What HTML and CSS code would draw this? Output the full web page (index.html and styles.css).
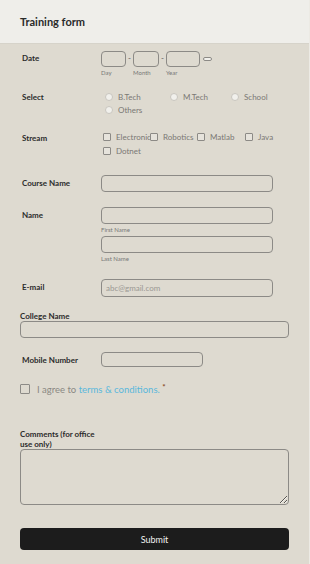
FILE: index.html
```html
<!DOCTYPE html>
<html lang="en">

<head>
    <meta charset="UTF-8">
    <meta name="viewport" content="width=device-width, initial-scale=1.0">
    <title>Training form</title>
    <link rel="stylesheet" href="styles.css">
</head>

<body>
    <div class="page">
        <div class="header">
            <h1>Training form</h1>
        </div>

        <form class="form">
            <!-- Date -->
            <div class="row row-date">
                <label class="label">Date</label>
                <div class="field date-field">
                    <div class="date-part">
                        <input type="text" class="input date-day">
                        <span class="sub">Day</span>
                    </div>
                    <span class="dash">-</span>
                    <div class="date-part">
                        <input type="text" class="input date-month">
                        <span class="sub">Month</span>
                    </div>
                    <span class="dash">-</span>
                    <div class="date-part">
                        <input type="text" class="input date-year">
                        <span class="sub">Year</span>
                    </div>
                    <span class="date-pick"></span>
                </div>
            </div>

            <!-- Select -->
            <div class="row row-select">
                <label class="label">Select</label>
                <div class="field options">
                    <span class="opt opt-radio w1"><span class="radio"></span>B.Tech</span>
                    <span class="opt opt-radio w2"><span class="radio"></span>M.Tech</span>
                    <span class="opt opt-radio"><span class="radio"></span>School</span>
                    <span class="opt opt-radio"><span class="radio"></span>Others</span>
                </div>
            </div>

            <!-- Stream -->
            <div class="row row-stream">
                <label class="label">Stream</label>
                <div class="field options">
                    <span class="opt opt-check c1"><span class="check"></span>Electronic</span>
                    <span class="opt opt-check c2"><span class="check"></span>Robotics</span>
                    <span class="opt opt-check c3"><span class="check"></span>Matlab</span>
                    <span class="opt opt-check"><span class="check"></span>Java</span>
                    <span class="opt opt-check"><span class="check"></span>Dotnet</span>
                </div>
            </div>

            <div class="row row-course">
                <label class="label">Course Name</label>
                <div class="field"><input type="text" class="input wide"></div>
            </div>

            <div class="row row-name">
                <label class="label">Name</label>
                <div class="field">
                    <input type="text" class="input wide">
                    <span class="sub">First Name</span>
                    <input type="text" class="input wide second">
                    <span class="sub">Last Name</span>
                </div>
            </div>

            <div class="row row-email">
                <label class="label">E-mail</label>
                <div class="field"><input type="text" class="input wide" placeholder="abc@gmail.com"></div>
            </div>

            <div class="stack row-college">
                <label class="label">College Name</label>
                <input type="text" class="input full">
            </div>

            <div class="row row-mobile">
                <label class="label">Mobile Number</label>
                <div class="field"><input type="text" class="input short"></div>
            </div>

            <div class="agree">
                <span class="check big"></span>
                <span>I agree to <a href="#" class="link">terms &amp; conditions.</a> <span class="req">*</span></span>
            </div>

            <div class="stack row-comments">
                <label class="label comments-label">Comments (for office use only)</label>
                <textarea class="input area"></textarea>
            </div>

            <button type="button" class="submit">Submit</button>
        </form>
    </div>
</body>

</html>
```

FILE: styles.css
```css
/* Reset styles */
* {
    margin: 0;
    padding: 0;
    box-sizing: border-box;
}

body {
    font-family: Lato, "Open Sans", sans-serif;
    background: #dedad0;
    color: #222;
    width: 310px;
    height: 564px;
    overflow: hidden;
}

.page {
    height: 564px;
    border-right: 1px solid #eceae4;
}

.header {
    height: 44px;
    background: #efeeea;
    padding: 15px 20px 0;
    border-bottom: 1px solid #d6d3ca;
}

.header h1 {
    font-size: 11px;
    font-weight: 700;
    color: #2a2a2a;
}

.form {
    padding: 0 21px 0 20px;
    display: flex;
    flex-direction: column;
}

.row {
    display: flex;
}

.label {
    width: 81px;
    flex-shrink: 0;
    padding-left: 2px;
    font-size: 8px;
    font-weight: 700;
    color: #2b2b2b;
}

.field {
    flex: 1;
    display: flex;
    flex-direction: column;
}

.input {
    display: block;
    height: 17px;
    background: transparent;
    border: 1px solid #8c8a86;
    border-radius: 4px;
    font-family: inherit;
    font-size: 8px;
    padding: 0 4px;
    outline: none;
}

.input::placeholder {
    color: #9a9893;
}

.sub {
    font-size: 6px;
    color: #777;
    margin-top: 2px;
}

/* Date */
.row-date {
    margin-top: 7px;
}

.row-date .label {
    padding-top: 2px;
}

.date-field {
    flex-direction: row;
    align-items: flex-start;
}

.date-part {
    display: flex;
    flex-direction: column;
}

.date-part .input {
    height: 16px;
}

.date-day {
    width: 25px;
}

.date-month {
    width: 26px;
}

.date-year {
    width: 34px;
}

.dash {
    font-size: 8px;
    color: #555;
    width: 7px;
    text-align: center;
    line-height: 14px;
}

.date-pick {
    width: 9px;
    height: 4px;
    background: #f1f0ec;
    border: 1px solid #8c8a86;
    border-radius: 2px;
    margin: 6px 0 0 3px;
}

/* Select / Stream */
.options {
    flex-direction: row;
    flex-wrap: wrap;
    padding-left: 2px;
}

.opt {
    display: flex;
    align-items: center;
    font-size: 8px;
    color: #7a7874;
    height: 13px;
    white-space: nowrap;
}

.w1 {
    width: 65px;
}

.w2 {
    width: 61px;
}

.radio {
    width: 8px;
    height: 8px;
    border-radius: 50%;
    background: #f1f0ec;
    border: 1px solid #c9c6bf;
    margin: 0 5px 0 2px;
}

.row-select {
    margin-top: 14px;
}

.row-select .label {
    padding-top: 2px;
}

.row-stream {
    margin-top: 14px;
}

.row-stream .label {
    padding-top: 3px;
}

.opt-check {
    height: 14px;
    margin-right: 6px;
}

.c1,
.c2 {
    width: 47px;
    margin-right: 0;
}

.c3 {
    width: 48px;
    margin-right: 0;
}

.check {
    flex-shrink: 0;
    width: 8px;
    height: 8px;
    border: 1px solid #8c8a86;
    border-radius: 1px;
    background: #e6e3dc;
    margin-right: 5px;
}

/* Text fields */
.wide {
    width: 172px;
}

.second {
    margin-top: 3px;
}

.row-course {
    margin-top: 17px;
}

.row-course .label,
.row-name .label,
.row-email .label,
.row-mobile .label {
    padding-top: 3px;
}

.row-name {
    margin-top: 15px;
}

.row-email {
    margin-top: 17px;
}

.row-email .input {
    height: 18px;
}

.stack {
    display: flex;
    flex-direction: column;
}

.stack .label {
    padding-left: 0;
    width: auto;
    line-height: 9px;
}

.row-college {
    margin-top: 15px;
}

.full {
    width: 269px;
}

.row-mobile {
    margin-top: 14px;
}

.short {
    width: 102px;
    height: 15px;
}

/* Agree */
.agree {
    display: flex;
    align-items: center;
    margin-top: 15px;
    font-size: 9.5px;
    color: #8a8883;
}

.check.big {
    width: 10px;
    height: 10px;
    background: transparent;
    margin-right: 7px;
}

.link {
    color: #5ab8dc;
    text-decoration: none;
}

.req {
    color: #8b4a2b;
    font-size: 8px;
    font-weight: 700;
    vertical-align: 3px;
}

.row-comments {
    margin-top: 34px;
}

.stack .comments-label {
    width: 82px;
    line-height: 10px;
}

.area {
    width: 269px;
    height: 56px;
    resize: vertical;
}

.submit {
    margin-top: 23px;
    width: 269px;
    height: 22px;
    background: #1c1c1c;
    color: #f2f2f2;
    border: none;
    border-radius: 4px;
    font-family: inherit;
    font-size: 9px;
}
```
